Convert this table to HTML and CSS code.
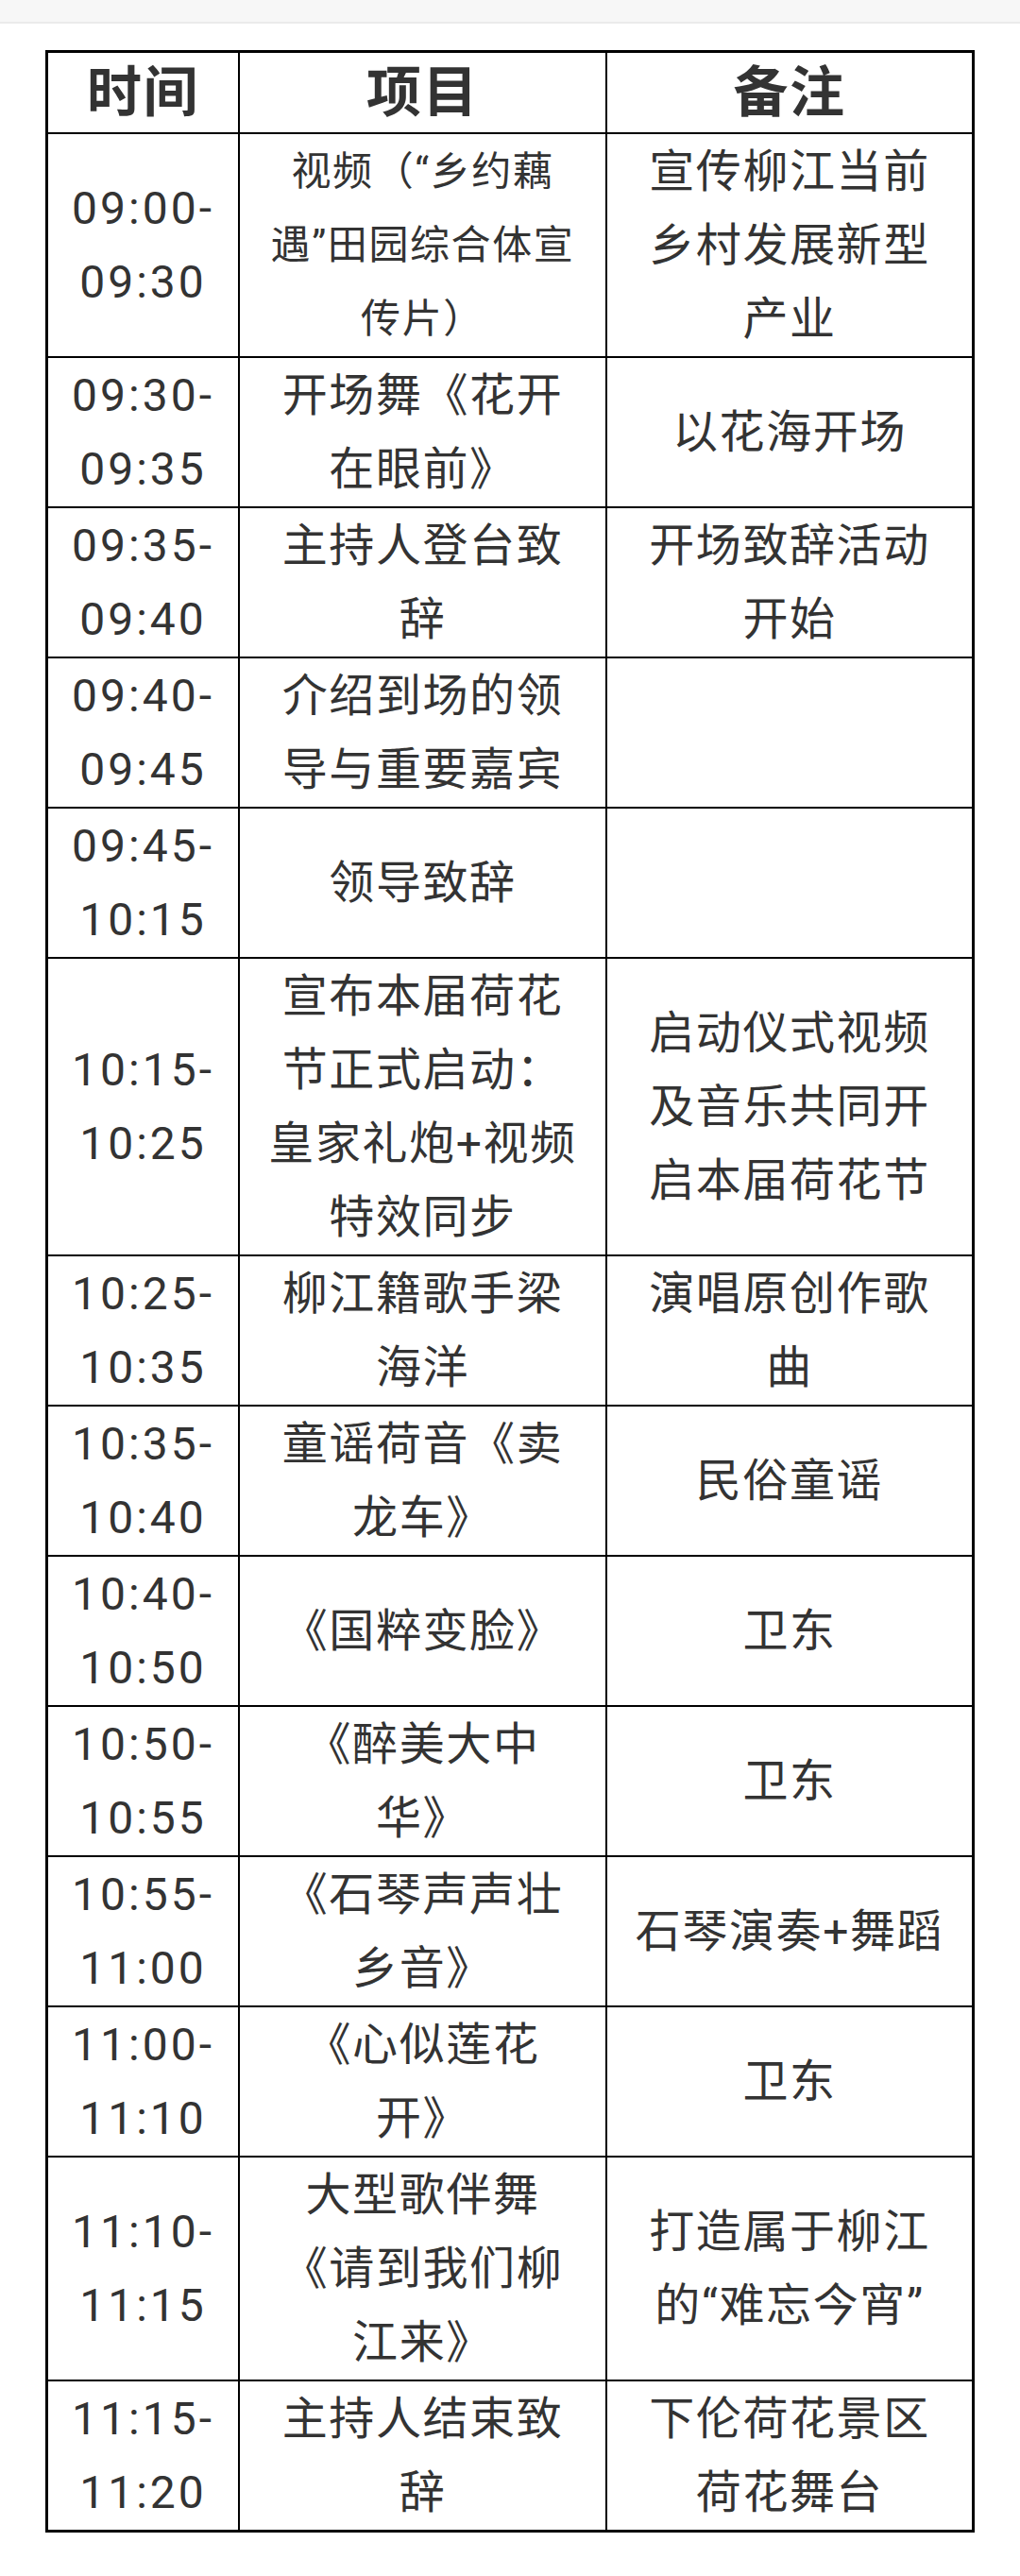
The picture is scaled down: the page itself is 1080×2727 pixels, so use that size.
FILE: index.html
```html
<!DOCTYPE html>
<html lang="zh-CN">
<head>
<meta charset="utf-8">
<title>活动流程</title>
<link rel="stylesheet" href="styles.css">
</head>
<body>
<div class="topbar"></div>
<div class="schedule">
  <div class="cell head">时间</div>
  <div class="cell head">项目</div>
  <div class="cell head">备注</div>

  <div class="cell time">09:00-<br>09:30</div>
  <div class="cell"><span class="small">视频（“乡约藕<br>遇”田园综合体宣<br>传片）</span></div>
  <div class="cell">宣传柳江当前<br>乡村发展新型<br>产业</div>

  <div class="cell time">09:30-<br>09:35</div>
  <div class="cell">开场舞《花开<br>在眼前》</div>
  <div class="cell">以花海开场</div>

  <div class="cell time">09:35-<br>09:40</div>
  <div class="cell">主持人登台致<br>辞</div>
  <div class="cell">开场致辞活动<br>开始</div>

  <div class="cell time">09:40-<br>09:45</div>
  <div class="cell">介绍到场的领<br>导与重要嘉宾</div>
  <div class="cell"></div>

  <div class="cell time">09:45-<br>10:15</div>
  <div class="cell">领导致辞</div>
  <div class="cell"></div>

  <div class="cell time">10:15-<br>10:25</div>
  <div class="cell">宣布本届荷花<br>节正式启动：<br>皇家礼炮+视频<br>特效同步</div>
  <div class="cell">启动仪式视频<br>及音乐共同开<br>启本届荷花节</div>

  <div class="cell time">10:25-<br>10:35</div>
  <div class="cell">柳江籍歌手梁<br>海洋</div>
  <div class="cell">演唱原创作歌<br>曲</div>

  <div class="cell time">10:35-<br>10:40</div>
  <div class="cell">童谣荷音《卖<br>龙车》</div>
  <div class="cell">民俗童谣</div>

  <div class="cell time">10:40-<br>10:50</div>
  <div class="cell">《国粹变脸》</div>
  <div class="cell">卫东</div>

  <div class="cell time">10:50-<br>10:55</div>
  <div class="cell">《醉美大中<br>华》</div>
  <div class="cell">卫东</div>

  <div class="cell time">10:55-<br>11:00</div>
  <div class="cell">《石琴声声壮<br>乡音》</div>
  <div class="cell">石琴演奏+舞蹈</div>

  <div class="cell time">11:00-<br>11:10</div>
  <div class="cell">《心似莲花<br>开》</div>
  <div class="cell">卫东</div>

  <div class="cell time">11:10-<br>11:15</div>
  <div class="cell">大型歌伴舞<br>《请到我们柳<br>江来》</div>
  <div class="cell">打造属于柳江<br>的“难忘今宵”</div>

  <div class="cell time">11:15-<br>11:20</div>
  <div class="cell">主持人结束致<br>辞</div>
  <div class="cell">下伦荷花景区<br>荷花舞台</div>
</div>
</body>
</html>
```

FILE: styles.css
```css
html, body {
  margin: 0;
  padding: 0;
  background: #ffffff;
}

body {
  width: 1080px;
  font-family: Roboto, "Noto Sans CJK SC", sans-serif;
  color: #333333;
  letter-spacing: 1.6px;
}

.topbar {
  height: 23px;
  background: #f7f7f7;
  border-bottom: 2px solid #ebebeb;
}

.schedule {
  display: grid;
  grid-template-columns: 203px 389px 386px;
  width: 984px;
  box-sizing: border-box;
  margin: 28px 0 0 48px;
  border: 3px solid #000000;
}

.cell {
  display: flex;
  align-items: center;
  justify-content: center;
  text-align: center;
  box-sizing: border-box;
  padding: 1px 0 0;
  font-size: 48px;
  line-height: 78px;
  border-right: 2px solid #000000;
  border-bottom: 2px solid #000000;
  min-width: 0;
}

.cell:nth-child(3n) {
  border-right: 0;
}

.cell:nth-last-child(-n+3) {
  border-bottom: 0;
}

.time {
  letter-spacing: 3px;
  font-weight: 400;
}

.head {
  padding: 0;
  font-size: 58px;
  line-height: 84px;
  font-weight: 700;
}

.small {
  font-size: 42px;
}
```
